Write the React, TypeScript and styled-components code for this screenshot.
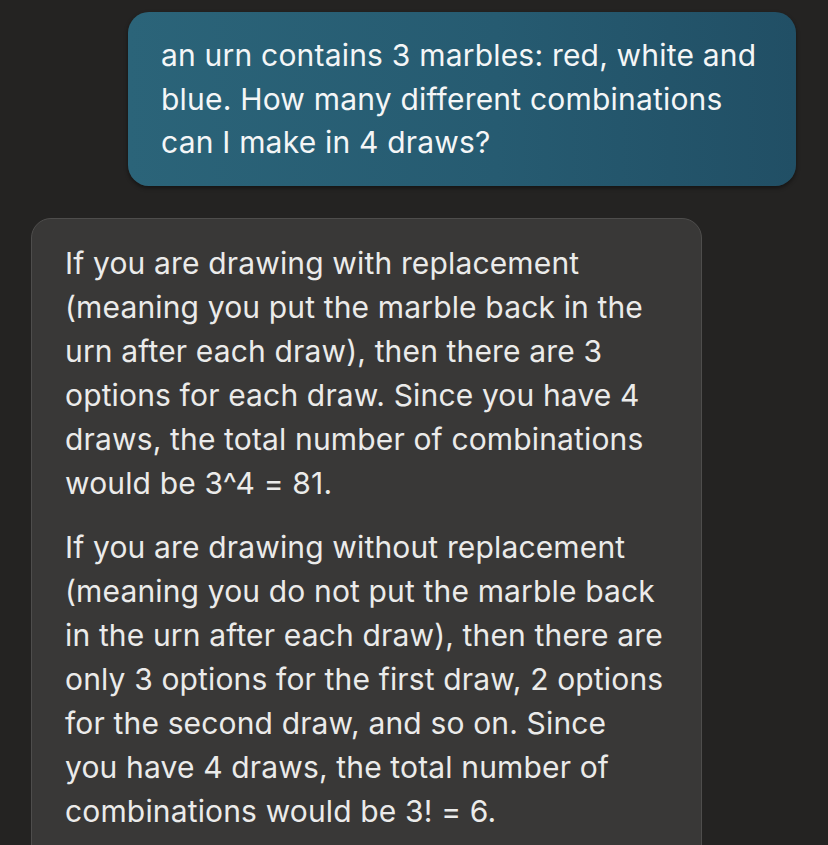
import React from "react";
import styled, { createGlobalStyle } from "styled-components";

const Global = createGlobalStyle`
  html, body { margin: 0; padding: 0; background: #242322; }
  body { font-family: Inter, Roboto, "Liberation Sans", sans-serif; -webkit-font-smoothing: antialiased; }
`;

const Page = styled.div`
  width: 828px;
  height: 845px;
  overflow: hidden;
  background: #242322;
  display: flex;
  flex-direction: column;
  padding-top: 12px;
  box-sizing: border-box;
  gap: 32px;
`;

const UserRow = styled.div`
  display: flex;
  justify-content: flex-end;
  padding-right: 32px;
`;

const UserBubble = styled.div`
  width: 668px;
  box-sizing: border-box;
  padding: 22px 20px 21px 33px;
  border-radius: 21px;
  background: linear-gradient(90deg, #2b6479 0%, #265b71 55%, #214f65 100%);
  box-shadow: 0 2px 4px rgba(0, 0, 0, 0.45);
  color: #f4f6f7;
  font-size: 30px;
  line-height: 43.5px;
  letter-spacing: 0.2px;
  white-space: nowrap;
`;

const BotRow = styled.div`
  display: flex;
  padding-left: 31px;
`;

const BotBubble = styled.div`
  width: 671px;
  box-sizing: border-box;
  padding: 22px 20px 40px 33px;
  border-radius: 20px;
  background: #393837;
  border: 1px solid #4e4d4c;
  color: #ebebea;
  font-size: 30px;
  line-height: 44px;
  letter-spacing: 0.15px;
  white-space: nowrap;
`;

const Para = styled.p`
  margin: 0 0 20px 0;
`;

export default function App() {
  return (
    <>
      <Global />
      <Page>
        <UserRow>
          <UserBubble>
            an urn contains 3 marbles: red, white and<br />
            blue. How many different combinations<br />
            can I make in 4 draws?
          </UserBubble>
        </UserRow>
        <BotRow>
          <BotBubble>
            <Para>
              If you are drawing with replacement<br />
              (meaning you put the marble back in the<br />
              urn after each draw), then there are 3<br />
              options for each draw. Since you have 4<br />
              draws, the total number of combinations<br />
              would be 3^4 = 81.
            </Para>
            <Para>
              If you are drawing without replacement<br />
              (meaning you do not put the marble back<br />
              in the urn after each draw), then there are<br />
              only 3 options for the first draw, 2 options<br />
              for the second draw, and so on. Since<br />
              you have 4 draws, the total number of<br />
              combinations would be 3! = 6.
            </Para>
          </BotBubble>
        </BotRow>
      </Page>
    </>
  );
}
